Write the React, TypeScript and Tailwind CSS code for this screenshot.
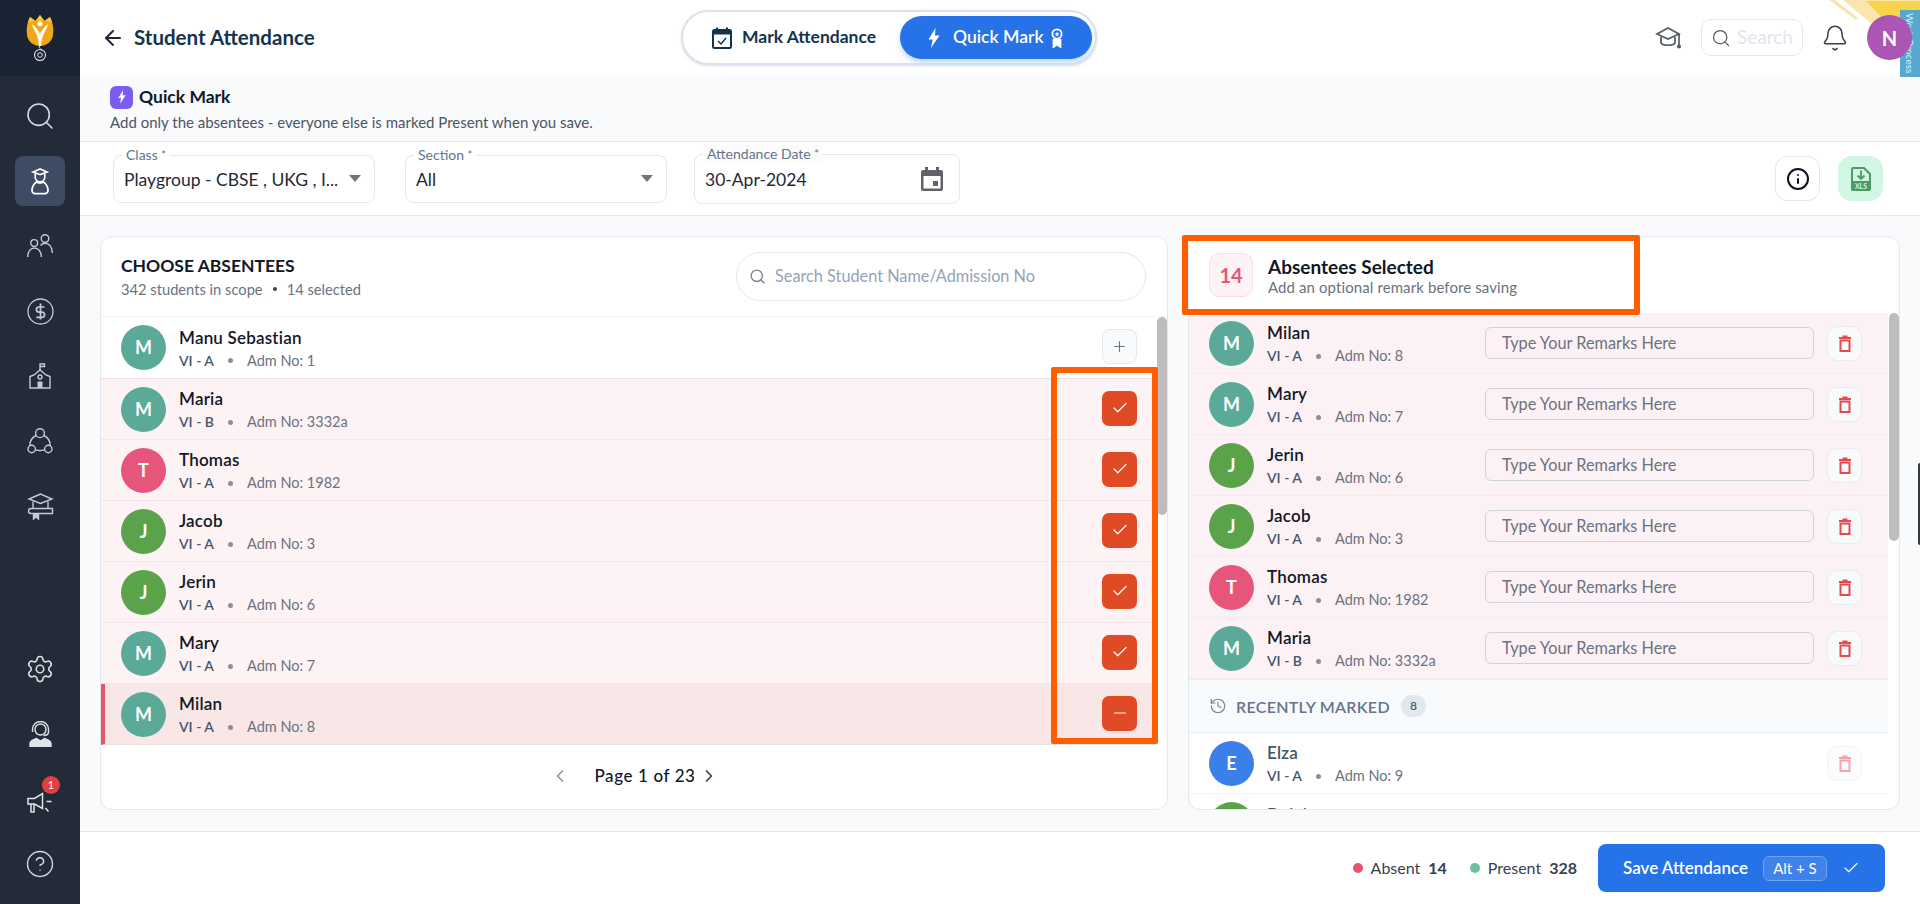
import React from "react";
import {
  ArrowLeft,
  BellIcon,
  Check,
  ChevronLeft,
  ChevronRight,
  CircleHelp,
  History,
  Info,
  Minus,
  Plus,
  Search,
  Settings,
} from "lucide-react";

type Student = { name: string; cls: string; adm: string; color: string };

const colors: Record<string, string> = {
  M: "bg-[#5ba998]",
  T: "bg-[#e5567a]",
  J: "bg-[#5ba34a]",
  E: "bg-[#3b7fe8]",
};

const chosen: Student[] = [
  { name: "Maria", cls: "VI - B", adm: "3332a", color: colors.M },
  { name: "Thomas", cls: "VI - A", adm: "1982", color: colors.T },
  { name: "Jacob", cls: "VI - A", adm: "3", color: colors.J },
  { name: "Jerin", cls: "VI - A", adm: "6", color: colors.J },
  { name: "Mary", cls: "VI - A", adm: "7", color: colors.M },
];

const remarks: Student[] = [
  { name: "Milan", cls: "VI - A", adm: "8", color: colors.M },
  { name: "Mary", cls: "VI - A", adm: "7", color: colors.M },
  { name: "Jerin", cls: "VI - A", adm: "6", color: colors.J },
  { name: "Jacob", cls: "VI - A", adm: "3", color: colors.J },
  { name: "Thomas", cls: "VI - A", adm: "1982", color: colors.T },
  { name: "Maria", cls: "VI - B", adm: "3332a", color: colors.M },
];

const Identity = ({ s, muted }: { s: Student; muted?: boolean }) => (
  <div className="flex items-center gap-[13px]">
    <div className={`w-[45px] h-[45px] rounded-full flex items-center justify-center text-white font-bold text-[18px] ${s.color}`}>
      {s.name[0]}
    </div>
    <div className="pt-[2px]">
      <div className={`text-[17px] font-semibold leading-[20px] tracking-[0.2px] ${muted ? "text-[#475569]" : "text-[#111827]"}`}>{s.name}</div>
      <div className="flex items-center text-[14.5px] leading-[18px] mt-[4px] text-[#6b7280]">
        <span className="text-[#475569] font-semibold text-[14px]">{s.cls}</span>
        <span className="w-[5px] h-[5px] rounded-full bg-[#8b8f98] mx-[14px]" />
        <span>Adm No: {s.adm}</span>
      </div>
    </div>
  </div>
);

const Bolt = ({ w, h, fill }: { w: number; h: number; fill: string }) => (
  <svg width={w} height={h} viewBox="0 0 12 20" fill={fill}>
    <path d="M7.5 0L0.5 11.5h4.2L3 20l8.5-12.5H7z" />
  </svg>
);

const StudentHat = () => (
  <svg width="18" height="27" viewBox="0 0 18 27" fill="none" stroke="#fff" strokeWidth="1.7">
    <path d="M9 1L2 4l7 2.6L16 4z" />
    <path d="M4.2 6v3a4.8 4.8 0 0 0 9.6 0V6" />
    <path d="M5.5 14C2 16.5 1 19.5 1 22.5A3 3 0 0 0 4 25.6h10a3 3 0 0 0 3-3.1c0-3-1-6-4.500-8.500-2.200 1.300-4.800 1.300-7 0z" />
  </svg>
);

const PeopleIcon = () => (
  <svg width="26" height="24" viewBox="0 0 26 24" fill="none" stroke="#c3cad5" strokeWidth="1.4">
    <circle cx="7.2" cy="9" r="3.4" />
    <path d="M0.7 23c0-5.5 3-9 6.8-9s6.8 3.5 6.8 9" />
    <circle cx="18" cy="4.5" r="3.8" />
    <path d="M13.5 11.5c1.3-1.5 2.8-2.2 4.5-2.200 4.200 0 7.300 3.700 7.300 9.700" />
  </svg>
);

const DollarIcon = () => (
  <svg width="27" height="27" viewBox="0 0 27 27" fill="none" stroke="#c3cad5">
    <circle cx="13.5" cy="13.5" r="12.5" strokeWidth="1.3" />
    <path d="M13.5 5.500v16M17.500 9H12a2.600 2.600 0 0 0 0 5.200h3a2.600 2.600 0 0 1 0 5.200H9.200" strokeWidth="1.7" />
  </svg>
);

const SchoolIcon = () => (
  <svg width="22" height="26" viewBox="0 0 22 26" fill="none" stroke="#c3cad5" strokeWidth="1.4">
    <path d="M11 8V1h4.500v2.500H11" />
    <path d="M1 25V13.500l4-1.500 6-5 6 5 4 1.500V25z" />
    <circle cx="11" cy="14" r="2" />
    <rect x="8.5" y="18.5" width="5" height="6.5" fill="#c3cad5" stroke="none" />
  </svg>
);

const CirclesIcon = () => (
  <svg width="26" height="26" viewBox="0 0 26 26" fill="none" stroke="#c3cad5" strokeWidth="1.4">
    <circle cx="13" cy="5.2" r="4.4" />
    <circle cx="4.7" cy="21" r="3.7" />
    <circle cx="21.3" cy="21" r="3.7" />
    <path d="M9 7.500C5 9.500 2.800 13.500 2.800 17.800M17 7.500c4 2 6.200 6 6.200 10.300M8.400 21.800c3 1 6.200 1 9.200 0" />
  </svg>
);

const CapBookIcon = () => (
  <svg width="27" height="27" viewBox="0 0 27 27" fill="none" stroke="#c3cad5" strokeWidth="1.4">
    <path d="M13.500 1L2 6l11.500 4.500L25 6z" />
    <path d="M6 8.500V15M21 8.500V15" />
    <path d="M25.500 15.500H4a2.200 2.200 0 0 0 0 5h21.500z" />
    <path d="M6.500 20.500V26L9 24l2.500 2v-5.500" fill="#c3cad5" />
  </svg>
);

const SupportIcon = () => (
  <svg width="23" height="26" viewBox="0 0 23 26" fill="none" stroke="#dfe3ea" strokeWidth="1.4">
    <circle cx="11.5" cy="8.5" r="5.5" />
    <path d="M3.500 11V8.500a8 8 0 0 1 16 0V11M19.500 11c0 2-2 3.500-5 3.500" />
    <path d="M1 25.500v-3c0-3 4.500-4 6.500-5l4 2.500 4-2.500c2 1 6.500 2 6.500 5v3z" fill="#dfe3ea" />
  </svg>
);

const MegaphoneIcon = () => (
  <svg width="26" height="21" viewBox="0 0 26 21" fill="none" stroke="#dfe3ea" strokeWidth="1.5">
    <path d="M1 6.500h6.500l8-5v15l-8-4.500H1z" />
    <path d="M4 12v8h3v-8" />
    <path d="M19.500 9.500h5M18.500 16l3 3.500" />
  </svg>
);

const GradCap = () => (
  <svg width="27" height="24" viewBox="0 0 27 24" fill="none" stroke="#555b63" strokeWidth="1.7">
    <path d="M13 2L2 8l11 5 11-5z" />
    <path d="M6 11v6c2 3 12 3 14 0v-6" />
    <path d="M24 8v11" />
    <circle cx="24" cy="20.5" r="1.2" fill="#555b63" />
  </svg>
);

const XlsIcon = () => (
  <svg width="20" height="24" viewBox="0 0 20 24">
    <path d="M2 1h11l6 6v15a1 1 0 0 1-1 1H2a1 1 0 0 1-1-1V2a1 1 0 0 1 1-1z" fill="none" stroke="#4c9a68" strokeWidth="2" />
    <rect x="1" y="14" width="18" height="9" rx="1" fill="#4c9a68" />
    <path d="M10 3.500v8M6.500 8.500l3.500 3.500 3.500-3.500" fill="none" stroke="#4c9a68" strokeWidth="1.8" />
    <text x="10" y="21.5" textAnchor="middle" fontSize="7" fontWeight="700" fill="#d1f7e4">XLS</text>
  </svg>
);

const TrashIcon = ({ color }: { color: string }) => (
  <svg width="12" height="17" viewBox="0 0 12 17" fill={color}>
    <rect x="3.5" y="0.5" width="5" height="1.5" />
    <rect x="0" y="2" width="12" height="2" />
    <rect x="1.5" y="5.5" width="9" height="10.5" fill="none" stroke={color} strokeWidth="2" />
  </svg>
);

const Ribbon = () => (
  <svg width="12" height="20" viewBox="0 0 12 20" fill="none" stroke="#fff" strokeWidth="1.8">
    <circle cx="6" cy="6" r="4.6" />
    <path d="M2.500 11v8l3.500-2.500L9.500 19v-8" fill="#fff" />
    <path d="M6 3.800l.8 1.500 1.500.2-1.100 1.100.3 1.600L6 7.400l-1.500.8.3-1.600-1.100-1.100 1.500-.2z" fill="#fff" stroke="none" />
  </svg>
);

const CalendarCheck = () => (
  <svg width="20" height="22" viewBox="0 0 20 22" fill="none">
    <rect x="1" y="3" width="18" height="18" rx="1.5" stroke="#12344d" strokeWidth="2" />
    <rect x="1" y="3" width="18" height="4.5" fill="#12344d" />
    <path d="M5 0.500v4M15 0.500v4" stroke="#12344d" strokeWidth="2" />
    <path d="M6 14l3 3 5-6" stroke="#12344d" strokeWidth="1.5" />
  </svg>
);

const Logo = () => (
  <svg width="28" height="46" viewBox="0 0 28 46">
    <path d="M14 0l4.500 6L24 2c3 6 4 12 3 18-1 7-7 11-13 11S2 27 1 20C0 14 1 8 4 2l5.500 4z" fill="#f0a818" />
    <path d="M14 0l4.500 6L24 2c1 2 1.500 4 2 6-4-2-8-2-12-2s-8 0-12 2c.5-2 1-4 2-6l5.500 4z" fill="#f8c52c" />
    <path d="M5.500 9c3.500 2 6 5 8.500 10 2.500-5 5-8 8.500-10L16 23l-1 8h-2l-1-8z" fill="#fff" />
    <circle cx="14" cy="9" r="2.4" fill="#fff" />
    <path d="M14 31c-3 2 3 3 1 5" stroke="#dfe3ea" strokeWidth="1" fill="none" />
    <circle cx="14" cy="40" r="5.5" stroke="#dfe3ea" strokeWidth="1.1" fill="none" />
    <circle cx="14" cy="40" r="2.3" stroke="#dfe3ea" strokeWidth="1" fill="none" />
  </svg>
);

const FloatField = ({ label, value, cls, icon, labelBg = "bg-white" }: { label: string; value: string; cls: string; icon: React.ReactNode; labelBg?: string }) => (
  <div className={`relative rounded-[8px] border border-[#e2e8f0] bg-white flex items-center justify-between pl-[10px] ${cls}`}>
    <span className={`absolute -top-[10px] left-[8px] px-[4px] text-[14px] leading-[18px] text-[#64748b] ${labelBg}`}>
      {label} <span className="text-[11px] align-top">*</span>
    </span>
    <span className="text-[17.5px] text-[#1f2937] mt-[3px] whitespace-nowrap">{value}</span>
    {icon}
  </div>
);

const Caret = () => <div className="w-0 h-0 border-x-[6px] border-x-transparent border-t-[7px] border-t-[#757575]" />;

export default function App() {
  return (
    <div className="flex h-[904px] w-full overflow-hidden bg-white font-['Lato','Liberation_Sans',sans-serif] relative">
      <aside className="w-[80px] shrink-0 bg-[#232b38] flex flex-col items-center">
        <div className="w-full h-[76px] bg-[#1a2333] flex items-center justify-center">
          <Logo />
        </div>
        <div className="flex flex-col items-center mt-[15px] w-full">
          <div className="h-[50px] flex items-center justify-center"><Search size={32} strokeWidth={1.2} className="text-[#d5dae2]" /></div>
          <div className="h-[50px] w-[50px] mt-[15px] rounded-[8px] bg-[#3d4c63] flex items-center justify-center"><StudentHat /></div>
          <div className="h-[50px] mt-[15px] flex items-center justify-center"><PeopleIcon /></div>
          <div className="h-[50px] mt-[15px] flex items-center justify-center"><DollarIcon /></div>
          <div className="h-[50px] mt-[15px] flex items-center justify-center"><SchoolIcon /></div>
          <div className="h-[50px] mt-[15px] flex items-center justify-center"><CirclesIcon /></div>
          <div className="h-[50px] mt-[15px] flex items-center justify-center"><CapBookIcon /></div>
        </div>
        <div className="flex flex-col items-center mt-auto mb-[15px] w-full">
          <div className="h-[50px] flex items-center justify-center"><Settings size={30} strokeWidth={1.3} className="text-[#d5dae2]" /></div>
          <div className="h-[50px] mt-[15px] flex items-center justify-center"><SupportIcon /></div>
          <div className="relative h-[50px] mt-[15px] flex items-center justify-center pt-[6px]">
            <MegaphoneIcon />
            <span className="absolute top-[2px] left-[15px] w-[18px] h-[18px] rounded-full bg-[#e53e3e] text-white text-[11px] flex items-center justify-center">1</span>
          </div>
          <div className="h-[50px] mt-[15px] flex items-center justify-center"><CircleHelp size={30} strokeWidth={1.1} className="text-[#d5dae2]" /></div>
        </div>
      </aside>

      <main className="flex-1 flex flex-col min-w-0">
        <header className="h-[75px] shrink-0 bg-white relative flex items-center pl-[21px] pr-[71px]">
          <ArrowLeft size={24} strokeWidth={2} className="text-[#1f2937]" />
          <h1 className="ml-[9px] text-[20.5px] font-bold text-[#12344d] whitespace-nowrap">Student Attendance</h1>
          <div className="absolute left-[601px] top-[10px] h-[55px] w-[416px] rounded-full border-2 border-[#dbe2ef] bg-white shadow-sm flex items-center pl-[29px] pr-[3px]">
            <CalendarCheck />
            <span className="ml-[10px] text-[17.5px] font-bold text-[#12344d] whitespace-nowrap">Mark Attendance</span>
            <div className="ml-auto w-[192px] h-[43px] rounded-full bg-[#2672e8] text-white flex items-center pl-[28px] shadow-md shadow-blue-200">
              <Bolt w={12} h={20} fill="#fff" />
              <span className="ml-[13px] text-[17.5px] font-semibold whitespace-nowrap">Quick Mark</span>
              <span className="ml-[7px] flex"><Ribbon /></span>
            </div>
          </div>
          <div className="ml-auto flex items-center">
            <GradCap />
            <div className="ml-[19px] w-[102px] h-[37px] rounded-[10px] border border-[#e2e8f0] flex items-center pl-[9px]">
              <Search size={20} strokeWidth={1.5} className="text-[#555b63]" />
              <span className="ml-[6px] text-[19px] text-[#dfe5ef]">Search</span>
            </div>
            <BellIcon size={28} strokeWidth={1.3} className="ml-[18px] text-[#3b3f46]" />
          </div>
          <div className="absolute right-0 top-0 w-[120px] h-[77px] overflow-hidden">
            <svg width="120" height="24" viewBox="0 0 120 24" className="absolute top-0 left-0">
              <path d="M29 0l27 20 2-2L35 0z" fill="#f9e5ae" />
              <path d="M43 0l29 24h48V0z" fill="#f9e5ae" />
              <path d="M66 1l22 23h32V1z" fill="#f8d548" />
            </svg>
            <div className="absolute right-0 top-[10px] w-[20px] h-[67px] bg-[#57a7cf] flex items-center justify-center">
              <span className="text-[10px] leading-[12px] text-[#d8eef8] [writing-mode:vertical-rl] whitespace-nowrap">Work Process</span>
            </div>
            <div className="absolute right-[8px] top-[15px] w-[45px] h-[45px] rounded-full bg-[#ab55b5] text-white flex items-center justify-center text-[20px] font-bold">N</div>
          </div>
        </header>

        <section className="h-[67px] shrink-0 bg-[#f9fafb] border-b border-[#e5e7ef] pl-[30px] pt-[9px]">
          <div className="flex items-center gap-[6px]">
            <span className="w-[23px] h-[23px] rounded-[6px] bg-[#7c5cf0] flex items-center justify-center"><Bolt w={8} h={14} fill="#fff" /></span>
            <span className="text-[17.5px] font-bold text-[#111827]">Quick Mark</span>
          </div>
          <p className="mt-[3px] text-[15px] leading-[18px] text-[#4b5563]">Add only the absentees - everyone else is marked Present when you save.</p>
        </section>

        <section className="h-[74px] shrink-0 bg-white border-b border-[#e5e7ef] flex items-center pl-[33px] pr-[37px]">
          <FloatField label="Class" value="Playgroup - CBSE , UKG , I..." cls="w-[262px] h-[48px] pr-[13px]" icon={<Caret />} />
          <div className="ml-[30px]"><FloatField label="Section" value="All" cls="w-[262px] h-[48px] pr-[13px]" icon={<Caret />} /></div>
          <div className="ml-[27px]"><FloatField label="Attendance Date" value="30-Apr-2024" cls="w-[266px] h-[50px] pr-[16px]" labelBg="bg-[#fbfbfb]" icon={
            <svg width="22" height="24" viewBox="0 0 22 24" fill="#5f6368"><path d="M4 0h3v3h8V0h3v3h2a2 2 0 0 1 2 2v17a2 2 0 0 1-2 2H2a2 2 0 0 1-2-2V5a2 2 0 0 1 2-2h2zM2.500 9v12.500h17V9zM12 14h5v5h-5z" /></svg>
          } /></div>
          <button className="ml-auto w-[45px] h-[45px] rounded-[12px] border border-[#e2e8f0] bg-white flex items-center justify-center">
            <Info size={24} strokeWidth={2} className="text-[#0b1220]" />
          </button>
          <button className="ml-[18px] w-[45px] h-[45px] rounded-[14px] bg-[#d1f7e4] flex items-center justify-center">
            <XlsIcon />
          </button>
        </section>

        <div className="flex-1 bg-[#f8fafc] flex gap-[20px] px-[20px] pt-[20px] pb-[21px] min-h-0">
          <div className="w-[1068px] shrink-0 bg-white rounded-[12px] border border-[#e5e7ef] flex flex-col overflow-hidden">
            <div className="h-[80px] shrink-0 flex items-center pl-[20px] pr-[21px] border-b border-[#f1f3f6]">
              <div>
                <div className="text-[17.5px] font-bold text-[#111827] leading-[22px]">CHOOSE ABSENTEES</div>
                <div className="mt-[3px] text-[14.7px] text-[#6b7280] leading-[18px] flex items-center">
                  342 students in scope<span className="w-[4px] h-[4px] rounded-full bg-[#374151] mx-[10px]" />14 selected
                </div>
              </div>
              <div className="ml-auto w-[410px] h-[49px] rounded-full border border-[#e2e8f0] flex items-center pl-[12px]">
                <Search size={17} strokeWidth={2} className="text-[#7b8794]" />
                <span className="ml-[9px] text-[16.3px] text-[#94a3b8]">Search Student Name/Admission No</span>
              </div>
            </div>
            <div className="flex relative">
              <div className="flex-1">
                <div className="h-[62px] flex items-center justify-between pl-[20px] pr-[19px] border-b border-[#f5dfe5]">
                  <Identity s={{ name: "Manu Sebastian", cls: "VI - A", adm: "1", color: colors.M }} />
                  <div className="-mt-[2px] w-[35px] h-[35px] rounded-[8px] border border-[#e2e8f0] bg-[#f8fafc] flex items-center justify-center"><Plus size={17} strokeWidth={1.5} className="text-[#64748b]" /></div>
                </div>
                {chosen.map((s) => (
                  <div key={s.name} className="h-[61px] flex items-center justify-between pl-[20px] pr-[19px] bg-[#fdf2f4] border-b border-[#f7e3e8]">
                    <Identity s={s} />
                    <div className="-mt-[2px] w-[35px] h-[35px] rounded-[7px] bg-[#e04a24] flex items-center justify-center"><Check size={18} strokeWidth={1.6} className="text-white" /></div>
                  </div>
                ))}
                <div className="h-[61px] flex items-center justify-between pl-[16px] pr-[19px] bg-[#f9e6e6] border-l-[4px] border-l-[#e5566b] border-b border-b-[#e9e2e2]">
                  <Identity s={{ name: "Milan", cls: "VI - A", adm: "8", color: colors.M }} />
                  <div className="-mt-[2px] w-[35px] h-[35px] rounded-[7px] bg-[#e04a24] flex items-center justify-center"><Minus size={18} strokeWidth={1.6} className="text-white" /></div>
                </div>
              </div>
              <div className="w-[11px] shrink-0 bg-white">
                <div className="w-[10px] ml-[1px] h-[198px] rounded-full bg-[#bdbdbd]" />
              </div>
            </div>
            <div className="flex-1 flex items-center justify-center pb-[2px]">
              <ChevronLeft size={20} strokeWidth={1.8} className="text-[#8b8f98]" />
              <span className="ml-[25px] w-[104px] whitespace-nowrap text-[17px] tracking-[0.6px] font-medium text-[#111827]">Page 1 of 23</span>
              <ChevronRight size={20} strokeWidth={2} className="text-[#374151]" />
            </div>
          </div>

          <div className="flex-1 min-w-0 bg-white rounded-[12px] border border-[#e5e7ef] flex flex-col overflow-hidden">
            <div className="h-[76px] shrink-0 flex items-center pl-[20px]">
              <div className="w-[44px] h-[44px] rounded-[10px] bg-[#fdf2f4] border border-[#f7dfe5] flex items-center justify-center text-[20px] font-bold text-[#e5567a]">14</div>
              <div className="ml-[15px]">
                <div className="mt-[1px] text-[19px] font-bold text-[#111827] leading-[22px]">Absentees Selected</div>
                <div className="text-[15px] tracking-[0.1px] text-[#6b7280] leading-[18px]">Add an optional remark before saving</div>
              </div>
            </div>
            <div className="flex min-h-0 flex-1">
              <div className="flex-1 min-w-0 overflow-hidden">
                {remarks.map((s) => (
                  <div key={s.name} className="h-[61px] flex items-center pl-[20px] pr-[26px] bg-[#fcf1f4] border-b border-[#f7ebee]">
                    <Identity s={s} />
                    <div className="ml-auto w-[329px] h-[32px] rounded-[6px] border border-[#cfd4dc] flex items-center pl-[16px] pt-[1px] text-[16.3px] text-[#6b7280]">Type Your Remarks Here</div>
                    <div className="ml-[13px] w-[35px] h-[35px] rounded-[10px] border border-[#e8ebf0] bg-[#f8fafc] flex items-center justify-center"><TrashIcon color="#e5484d" /></div>
                  </div>
                ))}
                <div className="h-[54px] bg-[#f8fafc] border-y border-[#e8edf3] flex items-center pl-[20px]">
                  <History size={18} strokeWidth={1.6} className="text-[#7b8794]" />
                  <span className="ml-[9px] pt-[1px] text-[16px] font-semibold tracking-[0.3px] text-[#64748b]">RECENTLY MARKED</span>
                  <span className="ml-[11px] w-[25px] h-[22px] rounded-full bg-[#e2e8f0] flex items-center justify-center text-[12px] font-semibold text-[#475569]">8</span>
                </div>
                <div className="h-[61px] flex items-center pl-[20px] pr-[26px] border-b border-[#f1f3f6]">
                  <Identity s={{ name: "Elza", cls: "VI - A", adm: "9", color: colors.E }} muted />
                  <div className="ml-auto w-[35px] h-[35px] rounded-[10px] border border-[#f1f3f6] bg-[#fbfcfd] flex items-center justify-center"><TrashIcon color="#f2a3ad" /></div>
                </div>
                <div className="h-[61px] flex items-center pl-[20px] pr-[26px]">
                  <Identity s={{ name: "Delvin", cls: "VI - A", adm: "10", color: colors.J }} muted />
                </div>
              </div>
              <div className="w-[11px] shrink-0">
                <div className="w-[10px] ml-[1px] h-[228px] rounded-full bg-[#bdbdbd]" />
              </div>
            </div>
          </div>
        </div>

        <footer className="h-[73px] shrink-0 bg-white border-t border-[#e2e8f0] flex items-center justify-end pr-[35px]">
          <span className="w-[10px] h-[10px] rounded-full bg-[#e5566b]" />
          <span className="ml-[8px] text-[16px] text-[#374151]">Absent</span>
          <span className="ml-[8px] text-[16px] font-bold text-[#374151]">14</span>
          <span className="ml-[23px] w-[10px] h-[10px] rounded-full bg-[#6cc09b]" />
          <span className="ml-[8px] text-[16px] text-[#374151]">Present</span>
          <span className="ml-[8px] text-[16px] font-bold text-[#374151]">328</span>
          <button className="ml-[21px] w-[287px] h-[48px] rounded-[8px] bg-[#2672e8] text-white flex items-center pl-[25px]">
            <span className="text-[17px] font-semibold whitespace-nowrap">Save Attendance</span>
            <span className="ml-[15px] w-[64px] h-[25px] rounded-[6px] border border-[#6ea1f0] bg-[#3f82ea] flex items-center justify-center text-[15px]">Alt + S</span>
            <Check size={18} strokeWidth={1.5} className="ml-[15px]" />
          </button>
        </footer>
      </main>

      {/* annotation boxes drawn over the screenshot */}
      <div className="absolute left-[1051px] top-[367px] w-[107px] h-[377px] border-[6px] border-[#ff5e00] rounded-[2px] pointer-events-none" />
      <div className="absolute left-[1182px] top-[235px] w-[458px] h-[80px] border-[6px] border-[#ff5e00] rounded-[2px] pointer-events-none" />
      <div className="absolute right-0 top-[463px] w-[2px] h-[82px] rounded-l-[2px] bg-[#333a45]" />
    </div>
  );
}
